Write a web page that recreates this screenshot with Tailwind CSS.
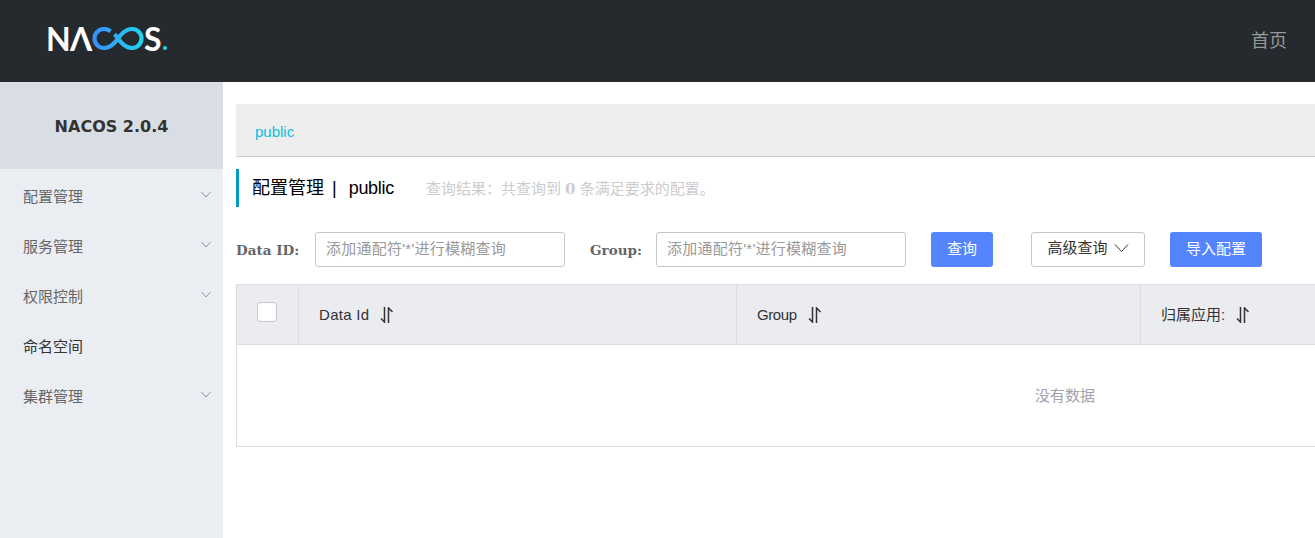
<!DOCTYPE html>
<html lang="zh-CN">

<head>
    <meta charset="UTF-8">
    <meta name="viewport" content="width=device-width, initial-scale=1.0">
    <script src="https://cdn.jsdelivr.net/npm/@tailwindcss/browser@4"></script>
    <title>Nacos</title>
</head>

<body class="h-[538px] overflow-hidden bg-white font-['Liberation_Sans','Noto_Sans_CJK_SC',sans-serif] text-[15px]">
    <!-- header -->
    <header class="flex h-[82px] items-center justify-between bg-[#252a2f] pl-[46px] pr-[28px]">
        <div class="mb-[6px] flex h-[23px] items-center text-white" aria-label="NACOS.">
            <span class="w-[24px] font-['Lato',sans-serif] text-[32px] font-bold leading-[23px]">N</span>
            <span class="w-[21px] font-['Lato',sans-serif] text-[32px] font-bold leading-[23px]">Λ</span>
            <svg class="ml-[1px]" width="52" height="23" viewBox="0 0 52 23" fill="none">
                <defs>
                    <linearGradient id="loop" x1="0" x2="52" y1="0" y2="0" gradientUnits="userSpaceOnUse">
                        <stop offset="0" stop-color="#3a8bfb" />
                        <stop offset="1" stop-color="#1fd6ee" />
                    </linearGradient>
                </defs>
                <path d="M18.500 4.200C16.500 2.800 14.500 2 12 2A9.500 9.500 0 0 0 12 21C18 21 22.500 16.500 26 11.500C29.500 6.500 34 2 40 2A9.500 9.500 0 0 1 40 21C34 21 29.500 16.500 26 11.500C25 10 23.800 8.600 22.500 7.300" stroke="url(#loop)" stroke-width="4.200" />
            </svg>
            <span class="w-[19px] font-['Lato',sans-serif] text-[32px] font-bold leading-[23px]">S</span>
            <span class="mt-[19px] h-[4px] w-[4px] rounded-full bg-[#1fd6ee]"></span>
        </div>
        <a href="#" class="text-[18px] text-[#999]">首页</a>
    </header>

    <div class="flex h-[456px]">
        <!-- sidebar -->
        <aside class="w-[223px] shrink-0 bg-[#eaedf1]">
            <div class="flex h-[87px] items-center justify-center bg-[#d9dee4] pt-[3px] font-['DejaVu_Sans',sans-serif] text-[16px] font-bold text-[#333]">NACOS 2.0.4</div>
            <nav class="pt-[2px] text-[#666]">
                <a href="#" class="flex h-[50px] items-center justify-between pl-[23px] pr-[12px] pt-[2px]">配置管理
                    <svg class="mb-[6px]" width="10" height="7" viewBox="0 0 10 7" fill="none" stroke="#8a94a3"><path d="M.5 1L5 6L9.500 1" /></svg>
                </a>
                <a href="#" class="flex h-[50px] items-center justify-between pl-[23px] pr-[12px] pt-[2px]">服务管理
                    <svg class="mb-[6px]" width="10" height="7" viewBox="0 0 10 7" fill="none" stroke="#8a94a3"><path d="M.5 1L5 6L9.500 1" /></svg>
                </a>
                <a href="#" class="flex h-[50px] items-center justify-between pl-[23px] pr-[12px] pt-[2px]">权限控制
                    <svg class="mb-[6px]" width="10" height="7" viewBox="0 0 10 7" fill="none" stroke="#8a94a3"><path d="M.5 1L5 6L9.500 1" /></svg>
                </a>
                <a href="#" class="flex h-[50px] items-center pl-[23px] pt-[2px] text-[#333]">命名空间</a>
                <a href="#" class="flex h-[50px] items-center justify-between pl-[23px] pr-[12px] pt-[2px]">集群管理
                    <svg class="mb-[6px]" width="10" height="7" viewBox="0 0 10 7" fill="none" stroke="#8a94a3"><path d="M.5 1L5 6L9.500 1" /></svg>
                </a>
            </nav>
        </aside>

        <!-- main -->
        <main class="min-w-0 flex-1 overflow-hidden pl-[13px] pt-[22px]">
            <div class="flex h-[53px] items-center border-b border-[#ccc] bg-[#eee] pl-[19px] pt-[4px] text-[#09c0e0]">public</div>

            <div class="mt-[12px] flex h-[38px] items-center border-l-[3px] border-[#0099cc] pl-[13px]">
                <span class="flex text-[18px] text-black">配置管理<span class="ml-[8px] mr-[12px]">|</span><span class="tracking-[-0.3px]">public</span></span>
                <span class="ml-[32px] pt-[3px] text-[#ccc]">查询结果：共查询到 <b class="font-['DejaVu_Serif',serif]">0</b> 条满足要求的配置。</span>
            </div>

            <!-- filters -->
            <div class="mt-[25px] flex h-[35px] items-center text-[#666]">
                <label class="w-[79px] pt-[2px] font-['DejaVu_Serif',serif] text-[13.5px] font-bold">Data ID:</label>
                <input class="h-[35px] w-[250px] rounded-[3px] border border-[#c4c6cf] px-[10px] pb-[2px] tracking-[0.25px] placeholder:text-[#999]" placeholder="添加通配符'*'进行模糊查询">
                <label class="ml-[25px] w-[66px] pt-[2px] font-['DejaVu_Serif',serif] text-[13.5px] font-bold">Group:</label>
                <input class="h-[35px] w-[250px] rounded-[3px] border border-[#c4c6cf] px-[10px] pb-[2px] tracking-[0.25px] placeholder:text-[#999]" placeholder="添加通配符'*'进行模糊查询">
                <button class="ml-[25px] h-[35px] w-[62px] rounded-[3px] bg-[#5584ff] pb-[1px] text-white">查询</button>
                <button class="ml-[38px] flex h-[35px] w-[114px] items-center justify-center gap-[6px] rounded-[3px] border border-[#c4c6cf] pb-[3px] text-[#333]">高级查询
                    <svg width="15" height="10" viewBox="0 0 15 10" fill="none" stroke="#333"><path d="M1 1.500L7.500 8.500L14 1.500" /></svg>
                </button>
                <button class="ml-[25px] h-[35px] w-[92px] rounded-[3px] bg-[#5584ff] text-white">导入配置</button>
            </div>

            <!-- table -->
            <div class="mt-[17px] w-[1658px] border border-[#dcdee3] text-[#333]">
                <div class="flex h-[59px] items-center bg-[#ebecf0]">
                    <div class="flex h-full w-[62px] items-center justify-center border-r border-[#dcdee3] pr-[2px]">
                        <span class="mb-[5px] h-[20px] w-[20px] rounded-[4px] border border-[#c4c6cf] bg-white"></span>
                    </div>
                    <div class="flex h-full w-[438px] items-center gap-[11px] border-r border-[#dcdee3] pl-[20px] pt-[1px]"><span class="tracking-[0.3px]">Data Id</span>
                        <svg width="14" height="16" viewBox="0 0 14 16" fill="none" stroke-width="1.500"><path d="M4.500 0V15L1 11.500" stroke="#333" /><path d="M8.500 16V1L12.500 5" stroke="#333" /></svg>
                    </div>
                    <div class="flex h-full w-[404px] items-center gap-[11px] border-r border-[#dcdee3] pl-[20px] pt-[1px]"><span class="tracking-[-0.4px]">Group</span>
                        <svg width="14" height="16" viewBox="0 0 14 16" fill="none" stroke-width="1.500"><path d="M4.500 0V15L1 11.500" stroke="#333" /><path d="M8.500 16V1L12.500 5" stroke="#333" /></svg>
                    </div>
                    <div class="flex h-full flex-1 items-center gap-[11px] pl-[20px] pt-[1px]">归属应用:
                        <svg width="14" height="16" viewBox="0 0 14 16" fill="none" stroke-width="1.500"><path d="M4.500 0V15L1 11.500" stroke="#333" /><path d="M8.500 16V1L12.500 5" stroke="#333" /></svg>
                    </div>
                </div>
                <div class="flex h-[102px] items-center justify-center border-t border-[#dcdee3] pt-[2px] text-[#a0a2ad]">没有数据</div>
            </div>
        </main>
    </div>
</body>

</html>
